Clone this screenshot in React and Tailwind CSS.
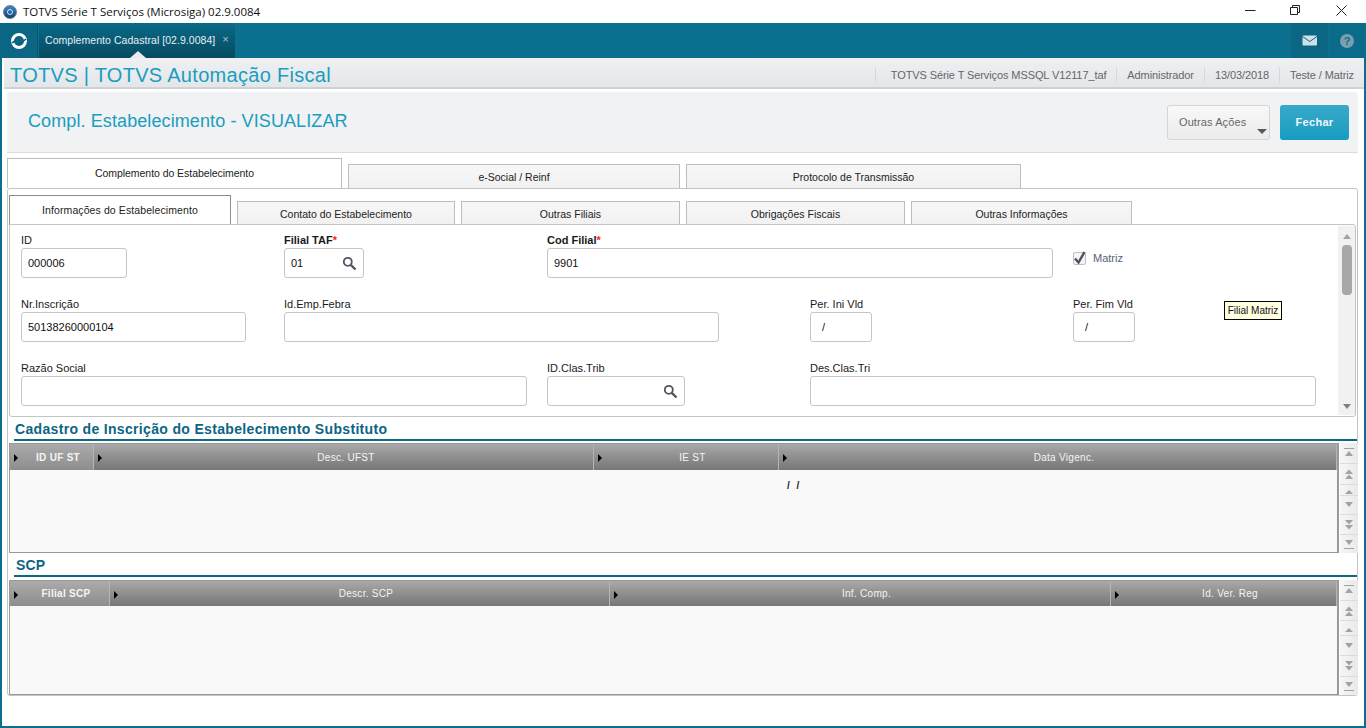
import React from 'react';

const arial = 'font-["Liberation_Sans",Arial,sans-serif]';

// ===== scroll button glyphs of the browse grids =====
function ScrollBtn({ kind, h }) {
  return (
    <div className={`w-[18px] flex items-center justify-center overflow-hidden bg-gradient-to-r from-[#f6f6f6] to-[#e9e9e9] ${h}`}>
      <svg width="18" height="16" viewBox="0 0 18 16" fill="#a2a2a2" className="shrink-0">
        {kind === 'upEnd' && (
          <g>
            <rect x="4" y="3" width="10" height="1" />
            <path d="M5 11L9 6L13 11Z" />
          </g>
        )}
        {kind === 'upDouble' && (
          <g>
            <path d="M5 8L9 3.5L13 8Z" />
            <path d="M5 13L9 8.5L13 13Z" />
          </g>
        )}
        {kind === 'up' && <path d="M5 12L9 8L13 12Z" />}
        {kind === 'down' && <path d="M5 5L13 5L9 10Z" />}
        {kind === 'downDouble' && (
          <g>
            <path d="M5 3L13 3L9 7.5Z" />
            <path d="M5 8L13 8L9 12.5Z" />
          </g>
        )}
        {kind === 'downEnd' && (
          <g>
            <path d="M5 4L13 4L9 9Z" />
            <rect x="4" y="12" width="10" height="1" />
          </g>
        )}
      </svg>
    </div>
  );
}

function Field({ label, bold, required, width, span, icon, value, center }) {
  return (
    <div className={`${span || ''} pt-[9px]`}>
      <div className={`text-[11px] leading-[13px] h-[13px] ${bold ? 'font-bold' : ''} text-[#1a1a1a]`}>
        {label}
        {required && <span className="text-[#ff2020]">*</span>}
      </div>
      <div className={`mt-[1px] h-[30px] ${width} border border-[#c6c6c6] rounded-[3px] bg-white flex items-center justify-between ${center ? 'pl-[11px]' : 'pl-[6px]'} pr-[6px] text-[11px] text-[#111111]`}>
        <span>{value}</span>
        {icon && (
          <svg width="15" height="15" viewBox="0 0 15 15" fill="none" stroke="#50565f" strokeWidth="1.8">
            <circle cx="5.8" cy="5.8" r="4" />
            <path d="M8.8 8.8L13.5 13.5" strokeWidth="2.4" />
          </svg>
        )}
      </div>
    </div>
  );
}

function Browse({ columns, rowText, bodyH, heightBtns, headH }) {
  return (
    <div className="flex">
      <div className={`w-[1330px] border border-r-2 border-[#999999] bg-[#f9f9f9] flex flex-col ${bodyH}`}>
        <div className={`flex ${headH} text-[10px] tracking-[0.3px] text-[#f4f4f4] bg-gradient-to-b from-[#a9a9a9] to-[#767676]`}>
          {columns.map((c, i) => (
            <div
              key={c.label}
              className={`${c.w} ${c.pad || 'pl-[13px]'} relative flex items-center justify-center border-r border-[#b5b5b5] ${i === 0 ? 'font-bold bg-gradient-to-b from-[#ababab] to-[#8d8d8d]' : ''}`}
            >
              <span className="absolute left-[4px] top-[10px] w-0 h-0 border-y-[4px] border-y-transparent border-l-[4px] border-l-black" />
              {c.label}
            </div>
          ))}
        </div>
        <div className="relative flex-1 text-[10px] text-[#222222]">
          {rowText && <span className="absolute left-[777px] top-[8px] font-bold tracking-[2px]">{rowText}</span>}
        </div>
      </div>
      <div className="ml-[1px] flex flex-col gap-[1px] bg-[#dcdcdc]">
        {['upEnd', 'upDouble', 'up', 'down', 'downDouble', 'downEnd'].map((k, i) => (
          <ScrollBtn key={k} kind={k} h={heightBtns[i]} />
        ))}
      </div>
    </div>
  );
}

function OuterTab({ label, w, active }) {
  return (
    <div className={`${w} flex items-center justify-center border border-b-0 border-[#bdbdbd] text-[10.5px] text-[#222222] ${active ? 'h-[30px] bg-white border-[#8c8c8c] tracking-[-0.05px]' : 'h-[24px] bg-gradient-to-b from-[#f7f7f7] to-[#f1f1f1] pt-[2px]'}`}>
      {label}
    </div>
  );
}

export default function App() {
  return (
    <div className={`w-[1366px] h-[728px] overflow-hidden flex flex-col bg-white ${arial}`}>
      {/* title bar */}
      <div className="h-[23px] flex items-center bg-white">
        <div className="w-[14px] h-[14px] ml-[3px] rounded-full bg-gradient-to-b from-[#3f86c4] to-[#123f78] border border-[#6a7f96] flex items-center justify-center">
          <span className="w-[6px] h-[6px] rounded-full border border-[#dbe8f3]" />
        </div>
        <span className={`ml-[6px] text-[11.5px] text-[#111111] font-["Open_Sans",sans-serif]`}>TOTVS Série T Serviços (Microsiga) 02.9.0084</span>
        <div className="flex-1" />
        <svg width="130" height="23" viewBox="0 0 130 23" fill="none" stroke="#222222">
          <path d="M9 10.5H19.5" />
          <path d="M54.5 7.5h7v7h-7z" />
          <path d="M56.5 7.5v-2h7v7h-2" />
          <path d="M100.5 5.5L110.5 15.5M110.5 5.5L100.5 15.5" />
        </svg>
      </div>

      {/* window body with teal frame */}
      <div className="flex-1 flex flex-col bg-[#0b708f] pl-[2px] pr-[2px] pb-[2px] min-h-0">
        {/* top nav */}
        <div className="h-[35px] -ml-[2px] -mr-[2px] flex">
          <div className="w-[38px] pl-[1px] bg-[#0a6682] border-r border-[#08556e] flex items-center justify-center">
            <svg width="18" height="18" viewBox="0 0 18 18" fill="none">
              <circle cx="9" cy="9" r="6.5" stroke="white" strokeWidth="3" />
              <path d="M2 11C6 6 11 13 16 7" stroke="#0a6682" strokeWidth="1.6" />
            </svg>
          </div>
          <div className="relative ml-[1px] w-[196px] bg-gradient-to-b from-[#0a6a88] to-[#064a60] flex items-center pl-[6px] text-[10.5px] text-[#e6eef2]">
            <span className="tracking-[0.05px]">Complemento Cadastral [02.9.0084]</span>
            <span className="ml-[7px] text-[11px] leading-none text-[#a9c4cf] -mt-[3px]">×</span>
            <span className="absolute left-[91px] bottom-0 w-0 h-0 border-x-[8px] border-x-transparent border-b-[7px] border-b-[#e9ecef]" />
          </div>
          <div className="flex-1" />
          <div className="w-[37px] bg-[#0a6682] flex items-center justify-center">
            <svg width="16" height="11" viewBox="0 0 16 11">
              <rect width="14.5" height="10" x="0.5" y="0.5" rx="1" fill="#cfe0e7" />
              <path d="M0.5 1.5L7.75 6.5L15 1.5" fill="none" stroke="#0a6682" />
            </svg>
          </div>
          <div className="ml-[1px] w-[36px] mr-[1px] bg-[#0a6c8a] flex items-center justify-center">
            <span className="w-[14px] h-[14px] rounded-full bg-[#7c9fb0] text-[#0a6c8a] text-[11px] font-bold leading-[14px] text-center">?</span>
          </div>
        </div>

        {/* page */}
        <div className="flex-1 bg-white flex flex-col min-h-0">
          {/* module strip */}
          <div className="h-[31px] ml-[2px] pt-[4px] flex items-center bg-gradient-to-b from-[#eef0f2] to-[#e4e7ea] border-b-2 border-[#cfd2d5] rounded-tl-[3px]">
            <span className="ml-[6px] text-[20px] text-[#1a9dc0] tracking-[0.3px]">TOTVS | TOTVS Automação Fiscal</span>
            <div className="flex-1" />
            <div className="flex items-center text-[11px] text-[#666666] h-[16px] tracking-[-0.1px]">
              <span className="border-l border-[#d5d7da] pl-[15px] pr-[10px] h-[16px] leading-[16px]">TOTVS Série T Serviços MSSQL V12117_taf</span>
              <span className="border-l border-[#d5d7da] pl-[10px] pr-[10px] h-[16px] leading-[16px]">Administrador</span>
              <span className="border-l border-[#d5d7da] pl-[10px] pr-[10px] h-[16px] leading-[16px]">13/03/2018</span>
              <span className="border-l border-[#d5d7da] pl-[10px] pr-[10px] h-[16px] leading-[16px]">Teste / Matriz</span>
            </div>
          </div>

          {/* actions bar */}
          <div className="mt-[3px] ml-[5px] mr-[6px] h-[61px] flex items-center bg-[#f0f2f3] border-b border-[#dcdcdc] rounded-t-[3px]">
            <span className="ml-[21px] text-[18px] text-[#1a9dc0] tracking-[0.1px] -mt-[1px]">Compl. Estabelecimento - VISUALIZAR</span>
            <div className="flex-1" />
            <div className="relative w-[103px] h-[35px] mr-[10px] rounded-[3px] border border-[#d5d5d5] bg-gradient-to-b from-[#f8f8f8] to-[#ececec] flex items-center pl-[11px] text-[11px] text-[#666666] tracking-[0.1px]">
              Outras Ações
              <span className="absolute right-[2px] bottom-[5px] w-0 h-0 border-x-[5px] border-x-transparent border-t-[5px] border-t-[#555a60]" />
            </div>
            <div className="w-[69px] h-[35px] mr-[9px] rounded-[3px] bg-gradient-to-b from-[#38a9c9] to-[#159cc0] flex items-center justify-center text-[11px] font-bold text-[#eef8fb] tracking-[0.3px]">
              Fechar
            </div>
          </div>

          {/* outer tabs */}
          <div className="ml-[5px] mr-[6px] mt-[5px] flex items-end gap-[6px] h-[30px]">
            <OuterTab label="Complemento do Estabelecimento" w="w-[335px]" active />
            <OuterTab label="e-Social / Reinf" w="w-[332px]" />
            <OuterTab label="Protocolo de Transmissão" w="w-[335px]" />
          </div>

          {/* outer panel */}
          <div className="ml-[5px] mr-[6px] h-[508px] border border-[#c4c4c4] rounded-[3px] px-[1px] flex flex-col">
            {/* inner tabs */}
            <div className="mt-[6px] h-[30px] flex items-end gap-[6px]">
              <div className="w-[222px] h-[30px] pt-[1px] border border-b-0 border-[#8c8c8c] bg-white flex items-center justify-center text-[10.5px] tracking-[0.1px] text-[#222222]">Informações do Estabelecimento</div>
              <OuterTab label="Contato do Estabelecimento" w="w-[218px]" />
              <OuterTab label="Outras Filiais" w="w-[219px]" />
              <OuterTab label="Obrigações Fiscais" w="w-[219px]" />
              <OuterTab label="Outras Informações" w="w-[221px]" />
            </div>

            {/* form panel */}
            <div className="relative h-[193px] -mt-[1px] border border-[#c4c4c4] rounded-[3px] bg-white flex">
              <div className="flex-1 pl-[11px] grid grid-cols-[repeat(5,263px)] auto-rows-[64px] content-start text-[#1a1a1a]">
                <Field label="ID" width="w-[106px]" value="000006" />
                <Field label="Filial TAF" bold required width="w-[80px]" value="01" icon />
                <Field label="Cod Filial" bold required width="w-[506px]" span="col-span-2" value="9901" />
                <div className="pt-[24px] flex items-start gap-[7px]">
                  <span className="w-[13px] h-[13px] mt-[3px] border border-[#c0c0c0] rounded-[2px] bg-[#f4f4f4] flex items-center justify-center">
                    <svg width="13" height="13" viewBox="0 0 13 13" fill="none" stroke="#4a5260" strokeWidth="2.4" className="overflow-visible">
                      <path d="M2 6.5L5.5 10.5L11.5 0" />
                    </svg>
                  </span>
                  <span className="text-[11px] leading-[18px] text-[#565f78]">Matriz</span>
                </div>

                <Field label="Nr.Inscrição" width="w-[225px]" value="50138260000104" />
                <Field label="Id.Emp.Febra" width="w-[435px]" span="col-span-2" />
                <Field label="Per. Ini Vld" width="w-[62px]" value="/" center />
                <Field label="Per. Fim Vld" width="w-[62px]" value="/" center />

                <Field label="Razão Social" width="w-[506px]" span="col-span-2" />
                <Field label="ID.Clas.Trib" width="w-[138px]" icon />
                <Field label="Des.Clas.Tri" width="w-[506px]" span="col-span-2" />
              </div>

              {/* vertical scrollbar */}
              <div className="w-[17px] my-[1px] bg-[#f1f1f1] flex flex-col items-center">
                <span className="mt-[8px] w-0 h-0 border-x-[4px] border-x-transparent border-b-[5px] border-b-[#a3a3a3]" />
                <span className="mt-[6px] w-[10px] h-[50px] rounded-[4px] bg-[#a8a8a8]" />
                <div className="flex-1" />
                <span className="mb-[6px] w-0 h-0 border-x-[4px] border-x-transparent border-t-[5px] border-t-[#7f7f7f]" />
              </div>

              {/* tooltip */}
              <div className="absolute left-[1214px] top-[76px] w-[58px] h-[19px] border border-black bg-[#ffffe1] text-[10px] leading-[17px] text-center text-[#111111]">Filial Matriz</div>
            </div>

            {/* first section */}
            <div className="mt-[3px] ml-[5px] -mr-[1px] h-[23px] border-b-2 border-[#0b6a85] pl-[1px] text-[14px] leading-[19px] font-bold text-[#0b6583] tracking-[0.33px]">Cadastro de Inscrição do Estabelecimento Substituto</div>
            <div className="mt-[2px]">
              <Browse
                columns={[
                  { label: 'ID UF ST', w: 'w-[84px]' },
                  { label: 'Desc. UFST', w: 'w-[500px]', pad: 'pl-[5px]' },
                  { label: 'IE ST', w: 'w-[185px]' },
                  { label: 'Data Vigenc.', w: 'w-[558px]' },
                ]}
                rowText="/ /"
                bodyH="h-[110px]"
                headH="h-[26px]"
                heightBtns={['h-[20px]', 'h-[20px]', 'h-[10px]', 'h-[18px]', 'h-[19px]', 'h-[18px]']}
              />
            </div>

            {/* second section */}
            <div className="mt-[2px] ml-[5px] -mr-[1px] h-[23px] border-b-2 border-[#0b6a85] pl-[2px] text-[14px] leading-[20px] font-bold text-[#0b6583] tracking-[0.1px]">SCP</div>
            <div className="mt-[3px]">
              <Browse
                columns={[
                  { label: 'Filial SCP', w: 'w-[100px]' },
                  { label: 'Descr. SCP', w: 'w-[500px]' },
                  { label: 'Inf. Comp.', w: 'w-[501px]' },
                  { label: 'Id. Ver. Reg', w: 'w-[226px]' },
                ]}
                bodyH="h-[115px]"
                headH="h-[25px]"
                heightBtns={['h-[20px]', 'h-[19px]', 'h-[14px]', 'h-[19px]', 'h-[20px]', 'h-[18px]']}
              />
            </div>
          </div>
        </div>
      </div>
    </div>
  );
}
